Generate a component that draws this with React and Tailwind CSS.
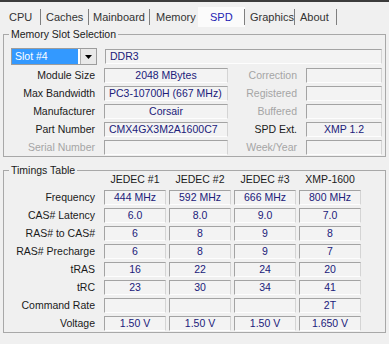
import React from "react";

const tabs = [
  { t: "CPU", w: "w-[37px]", pl: "pl-[5px]" },
  { t: "Caches", w: "w-[48px]", pl: "pl-[5px]" },
  { t: "Mainboard", w: "w-[61px]", pl: "pl-[4px]" },
  { t: "Memory", w: "w-[48px]", pl: "pl-[6px]", noSep: true },
  { t: "SPD", w: "w-[47px]", pl: "pl-[12px]", active: true },
  { t: "Graphics", w: "w-[50px]", pl: "pl-[5px]" },
  { t: "About", w: "w-[42px]", pl: "pl-[5px]" },
];

const slotRows = [
  { l: "Module Size", v: "2048 MBytes", c: true, l2: "Correction", v2: "" },
  { l: "Max Bandwidth", v: "PC3-10700H (667 MHz)", l2: "Registered", v2: "" },
  { l: "Manufacturer", v: "Corsair", c: true, l2: "Buffered", v2: "" },
  { l: "Part Number", v: "CMX4GX3M2A1600C7", l2: "SPD Ext.", v2: "XMP 1.2", on2: true },
  { l: "Serial Number", v: "", off: true, l2: "Week/Year", v2: "" },
];

const timings = [
  ["Frequency", "444 MHz", "592 MHz", "666 MHz", "800 MHz"],
  ["CAS# Latency", "6.0", "8.0", "9.0", "7.0"],
  ["RAS# to CAS#", "6", "8", "9", "8"],
  ["RAS# Precharge", "6", "8", "9", "7"],
  ["tRAS", "16", "22", "24", "20"],
  ["tRC", "23", "30", "34", "41"],
  ["Command Rate", "", "", "", "2T"],
  ["Voltage", "1.50 V", "1.50 V", "1.50 V", "1.650 V"],
];

const Box = ({ children, className = "", left }) => (
  <div
    className={`h-[15px] border-t border-l border-t-[#a3a3a3] border-l-[#a3a3a3] border-r border-b border-r-[#d4d4d4] border-b-[#fdfdfd] bg-[#f3f3f3] flex items-center text-[#20207a] leading-none whitespace-nowrap ${
      left ? "pl-[4px]" : "justify-center"
    } ${className}`}
  >
    {children}
  </div>
);

const App = () => {
  return (
    <div
      className="w-[389px] h-[344px] bg-[#f0f0f0] text-[#1a1a1a] overflow-hidden border-t-2 border-[#3c3c3c]"
      style={{ fontFamily: '"Liberation Sans", Arial, sans-serif' }}
    >
      {/* tabs */}
      <div className="flex mt-[5px] h-[20px] pl-[4px] text-[11px]">
        {tabs.map((tab) => (
          <div
            key={tab.t}
            className={`${tab.w} flex items-center ${tab.active ? "bg-[#fbfbfb] text-[#2424b4]" : "text-[#333333]"}`}
          >
            <span className={tab.pl}>{tab.t}</span>
            {!tab.noSep && <span className="ml-auto w-px h-[16px] bg-[#7f7f7f]"></span>}
          </div>
        ))}
      </div>

      {/* memory slot selection */}
      <fieldset className="mt-[1px] ml-[3px] w-[383px] border border-[#a8a8a8] text-[10.5px] pb-[1px]">
        <legend className="ml-[5px] px-[2px] leading-[13px]">Memory Slot Selection</legend>
        <div className="flex items-center mt-[7px] pl-[7px]">
          <div className="w-[86px] h-[17px] border border-[#9c9c9c] bg-white flex items-center">
            <div className="w-[66px] h-[15px] bg-[#3399ff] text-white flex items-center pl-[3px] leading-none">
              Slot #4
            </div>
            <div className="ml-[2px] w-[16px] h-[15px] bg-[#e9e9e9] border-l border-[#b0b0b0] flex items-center justify-center">
              <svg width="7" height="4" viewBox="0 0 7 4">
                <polygon points="0,0 7,0 3.5,4" fill="#000" />
              </svg>
            </div>
          </div>
          <Box left className="ml-[8px] w-[277px]">DDR3</Box>
        </div>
        <div className="flex flex-col gap-[3px] mt-[3px]">
          {slotRows.map((r) => (
            <div key={r.l} className="flex items-center">
              <div className={`w-[92px] text-right pr-[1px] leading-none ${r.off ? "text-[#a5a5a5]" : ""}`}>{r.l}</div>
              <Box left={!r.c} className="ml-[8px] w-[124px]">{r.v}</Box>
              <div className={`w-[70px] text-right pr-[1px] leading-none ${r.on2 ? "" : "text-[#a5a5a5]"}`}>{r.l2}</div>
              <Box className="ml-[8px] w-[76px]">{r.v2}</Box>
            </div>
          ))}
        </div>
      </fieldset>

      {/* timings table */}
      <fieldset className="mt-[7px] ml-[3px] w-[383px] border border-[#a8a8a8] text-[10.5px] pb-[1px]">
        <legend className="ml-[5px] px-[2px] leading-[13px]">Timings Table</legend>
        <div className="flex items-center h-[13px] -mt-[4px] leading-none">
          <div className="w-[92px]"></div>
          <div className="ml-[8px] grid grid-cols-[62px_62px_62px_62px] gap-x-[3px] text-center">
            <span>JEDEC #1</span>
            <span>JEDEC #2</span>
            <span>JEDEC #3</span>
            <span>XMP-1600</span>
          </div>
        </div>
        <div className="flex flex-col gap-[3px] mt-[4px]">
          {timings.map((row) => (
            <div key={row[0]} className="flex items-center">
              <div className="w-[92px] text-right pr-[1px] leading-none">{row[0]}</div>
              <div className="ml-[8px] grid grid-cols-[62px_62px_62px_62px] gap-x-[3px]">
                {row.slice(1).map((v, i) => (
                  <Box key={i}>{v}</Box>
                ))}
              </div>
            </div>
          ))}
        </div>
      </fieldset>
    </div>
  );
};

export default App;
